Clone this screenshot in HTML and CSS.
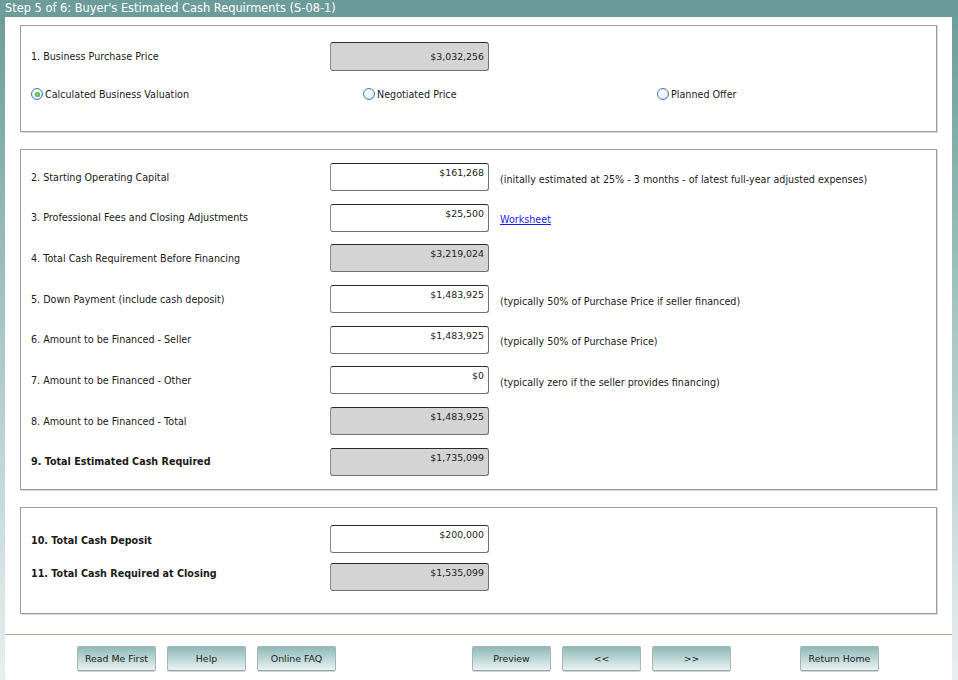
FILE: index.html
```html
<!DOCTYPE html>
<html>
<head>
<meta charset="utf-8">
<link rel="stylesheet" href="styles.css">
</head>
<body>
<div class="titlebar">Step 5 of 6: Buyer's Estimated Cash Requirments (S-08-1)</div>
<div class="page">
  <div class="box box1">
    <div class="row">
      <div class="label">1. Business Purchase Price</div>
      <div class="field ro mid">$3,032,256</div>
    </div>
    <div class="radios">
      <label class="radio"><span class="dot checked"></span>Calculated Business Valuation</label>
      <label class="radio"><span class="dot"></span>Negotiated Price</label>
      <label class="radio"><span class="dot"></span>Planned Offer</label>
    </div>
  </div>

  <div class="box box2">
    <div class="row">
      <div class="label">2. Starting Operating Capital</div>
      <div class="field">$161,268</div>
      <div class="hint">(initally estimated at 25% - 3 months - of latest full-year adjusted expenses)</div>
    </div>
    <div class="row">
      <div class="label">3. Professional Fees and Closing Adjustments</div>
      <div class="field">$25,500</div>
      <div class="hint"><a href="#" class="link">Worksheet</a></div>
    </div>
    <div class="row">
      <div class="label">4. Total Cash Requirement Before Financing</div>
      <div class="field ro">$3,219,024</div>
    </div>
    <div class="row">
      <div class="label">5. Down Payment (include cash deposit)</div>
      <div class="field">$1,483,925</div>
      <div class="hint">(typically 50% of Purchase Price if seller financed)</div>
    </div>
    <div class="row">
      <div class="label">6. Amount to be Financed - Seller</div>
      <div class="field">$1,483,925</div>
      <div class="hint">(typically 50% of Purchase Price)</div>
    </div>
    <div class="row">
      <div class="label">7. Amount to be Financed - Other</div>
      <div class="field">$0</div>
      <div class="hint">(typically zero if the seller provides financing)</div>
    </div>
    <div class="row">
      <div class="label">8. Amount to be Financed - Total</div>
      <div class="field ro">$1,483,925</div>
    </div>
    <div class="row">
      <div class="label bold">9. Total Estimated Cash Required</div>
      <div class="field ro">$1,735,099</div>
    </div>
  </div>

  <div class="box box3">
    <div class="row">
      <div class="label bold low">10. Total Cash Deposit</div>
      <div class="field">$200,000</div>
    </div>
    <div class="row">
      <div class="label bold high">11. Total Cash Required at Closing</div>
      <div class="field ro">$1,535,099</div>
    </div>
  </div>

  <div class="footer">
    <div class="btngroup">
      <button class="btn">Read Me First</button>
      <button class="btn">Help</button>
      <button class="btn">Online FAQ</button>
    </div>
    <div class="btngroup">
      <button class="btn">Preview</button>
      <button class="btn">&lt;&lt;</button>
      <button class="btn">&gt;&gt;</button>
    </div>
    <div class="btngroup">
      <button class="btn">Return Home</button>
    </div>
  </div>
</div>
</body>
</html>
```
FILE: styles.css
```css
html, body {
  margin: 0;
  padding: 0;
}
body {
  width: 958px;
  height: 680px;
  overflow: hidden;
  background: linear-gradient(to bottom, #6a9b98 0%, #a9c8c6 50%, #e8eff0 100%);
  font-family: "DejaVu Sans", Verdana, sans-serif;
  font-size: 9.6px;
  color: #1a1a1a;
}
.titlebar {
  height: 17px;
  line-height: 16px;
  padding-left: 5px;
  color: #ffffff;
  font-size: 11.4px;
  background: #6b9c99;
}
.page {
  margin: 0 6px 0 5px;
  background: #ffffff;
  height: 663px;
  padding-top: 8px;
  box-sizing: border-box;
}
.box {
  margin: 0 15px 17px 15px;
  border: 1px solid #9c9c9c;
  box-shadow: 1px 1px 0 #d8d8d8;
  padding-left: 10px;
  display: flex;
  flex-direction: column;
}
.box1 {
  padding-top: 16px;
  height: 107px;
  box-sizing: border-box;
}
.box2 {
  padding-top: 13px;
  padding-bottom: 13px;
  gap: 12.7px;
}
.box3 {
  padding-top: 17px;
  padding-bottom: 22px;
  gap: 10px;
  margin-bottom: 20px;
}
.row {
  display: flex;
  align-items: center;
  height: 28px;
}
.box1 .row {
  height: 29px;
}
.label {
  width: 299px;
  flex: none;
}
.label.bold {
  font-weight: bold;
}
.label.low {
  position: relative;
  top: 2px;
}
.label.high {
  position: relative;
  top: -3px;
}
.field {
  width: 159px;
  height: 100%;
  box-sizing: border-box;
  flex: none;
  border: 1px solid #707070;
  border-top-color: #2a2a2a;
  border-left-color: #8a8a8a;
  border-radius: 3px;
  background: #ffffff;
  text-align: right;
  padding: 3px 4px 0 0;
  font-size: 9.4px;
}
.field.ro {
  background: #d4d4d4;
}
.field.mid {
  display: flex;
  align-items: center;
  justify-content: flex-end;
  padding-top: 0;
}
.hint {
  margin-left: 11px;
  padding-top: 4px;
}
.link {
  color: #1a1aee;
  text-decoration: underline;
}
.radios {
  display: grid;
  grid-template-columns: 332px 294px auto;
  margin-top: 17px;
}
.radio {
  display: flex;
  align-items: center;
  gap: 2px;
}
.dot {
  width: 10px;
  height: 10px;
  border-radius: 50%;
  border: 1px solid #3f7db0;
  background: radial-gradient(circle at 40% 35%, #ffffff 0%, #e6eef6 60%, #c9d9e8 100%);
  display: flex;
  align-items: center;
  justify-content: center;
}
.dot.checked::after {
  content: "";
  width: 5px;
  height: 5px;
  border-radius: 50%;
  background: radial-gradient(circle, #8ee06f 0%, #3fae3a 70%, #2e8f2c 100%);
}
.footer {
  border-top: 1px solid #b4ab9a;
  padding: 11px 0 0 72px;
  display: flex;
}
.btngroup {
  display: flex;
  gap: 11px;
}
.btngroup:nth-child(2) {
  margin-left: 136px;
}
.btngroup:nth-child(3) {
  margin-left: 69px;
}
.btn {
  width: 79px;
  height: 25px;
  margin: 0;
  padding: 0;
  border: 1px solid #aab4b4;
  border-bottom-color: #9aa4a4;
  border-radius: 2px;
  background: linear-gradient(to bottom, #8dbab8 0%, #b6d3d2 45%, #e9f2f1 100%);
  font-family: "DejaVu Sans", Verdana, sans-serif;
  font-size: 9.4px;
  color: #222222;
  box-shadow: 0 1px 0 #d0d6d6;
}
```
